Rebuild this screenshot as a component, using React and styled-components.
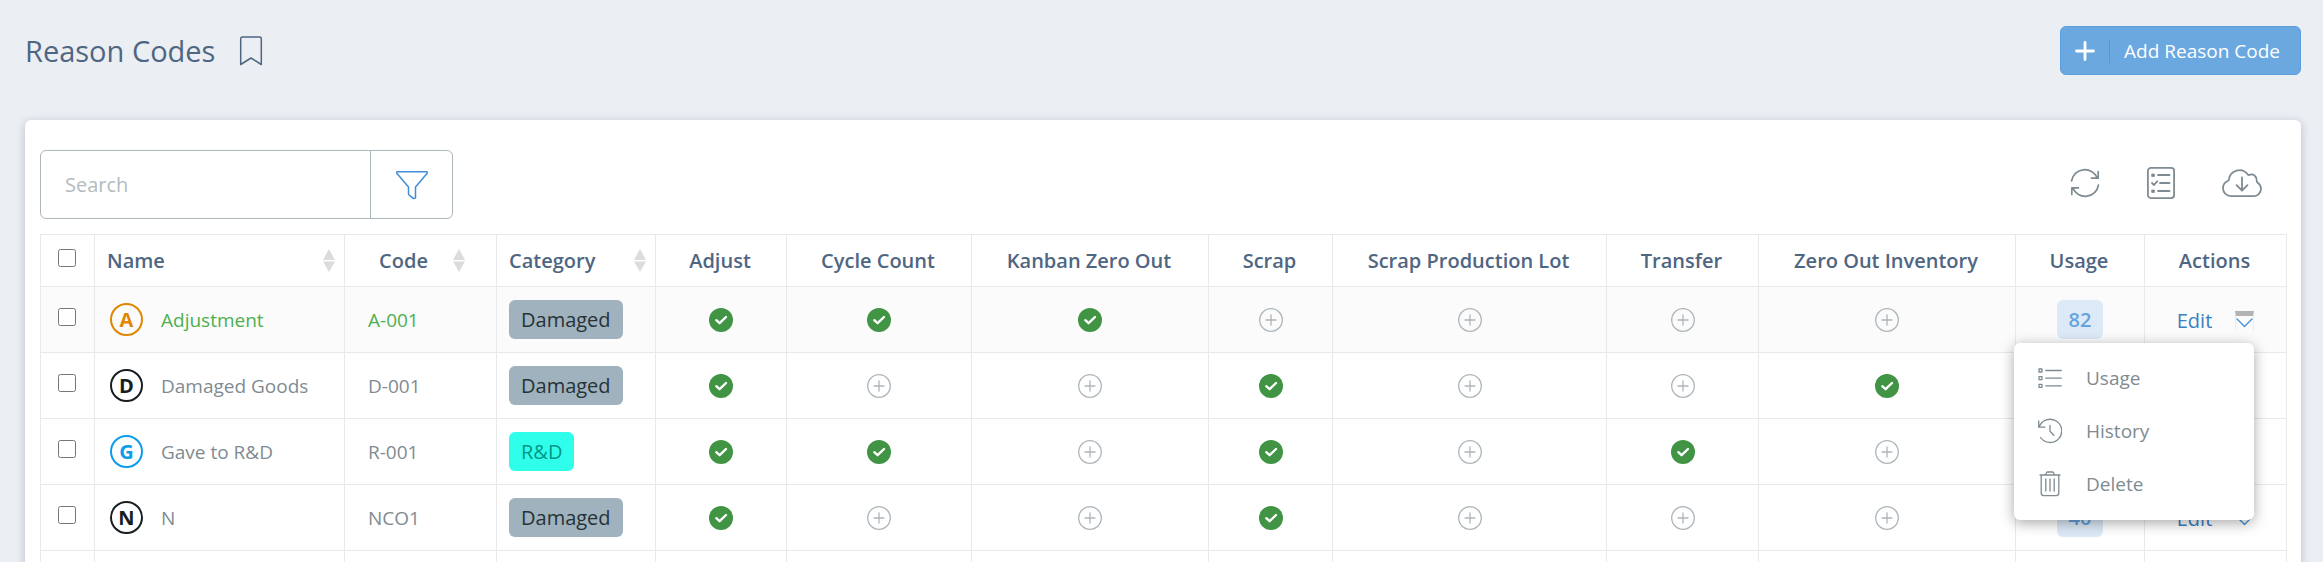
import React from 'react';
import styled, { createGlobalStyle, css } from 'styled-components';

const GlobalStyle = createGlobalStyle`
* {
    box-sizing: border-box;
}
body {
    margin: 0;
    background: #ebeef3;
    font-family: 'Open Sans', 'Noto Sans', sans-serif;
    font-size: 20px;
    line-height: 28px;
    color: #7f8b92;
}
button, input {
    font: inherit;
    color: inherit;
}
svg {
    display: block;
}
`

const Page = styled.div`
height: 100vh;
overflow: hidden;
padding: 0 22px 0 25px;
`

const Header = styled.header`
display: flex;
align-items: center;
justify-content: space-between;
height: 101px;
`

const TitleGroup = styled.div`
display: flex;
align-items: center;
gap: 24px;
`

const Title = styled.h1`
margin: 0;
font-size: 29px;
line-height: 40px;
font-weight: 400;
color: #4f6682;
`

const IconButton = styled.button`
display: flex;
align-items: center;
justify-content: center;
padding: 0;
border: none;
background: transparent;
color: ${props => props.$color || '#7f8b92'};
cursor: pointer;
`

const AddButton = styled.button`
display: flex;
align-items: center;
height: 49px;
padding: 0 20px 0 14px;
border: 1px solid #5c9fde;
border-radius: 6px;
background: #6ca8e0;
color: #fff;
font-size: 19px;
cursor: pointer;
`

const AddLabel = styled.span`
margin-left: 14px;
padding-left: 14px;
border-left: 1px solid #5796d2;
line-height: 24px;
`

const Card = styled.main`
margin-top: 19px;
padding: 30px 15px;
border-radius: 6px;
background: #fff;
box-shadow: 0 2px 8px rgba(60, 75, 95, 0.3);
`

const Toolbar = styled.div`
display: flex;
align-items: center;
justify-content: space-between;
margin-bottom: 15px;
`

const SearchBox = styled.div`
display: flex;
width: 413px;
height: 69px;
border: 1px solid #adb6bb;
border-radius: 6px;
`

const SearchInput = styled.input`
flex: 1;
min-width: 0;
padding: 0 24px;
border: none;
outline: none;
background: transparent;

&::placeholder {
    color: #b3bbc0;
    opacity: 1;
}
`

const FilterButton = styled(IconButton)`
width: 82px;
border-left: 1px solid #adb6bb;
`

const Tools = styled.div`
display: flex;
align-items: center;
gap: 47px;
padding: 0 24px 4px 0;
`

const Table = styled.table`
width: 100%;
table-layout: fixed;
border-collapse: collapse;
`

const Col = styled.col`
width: ${props => props.$w}px;
`

const HeadCell = styled.th`
height: 52px;
padding: 0 14px 0 12px;
border: 1px solid #e9e9e9;
font-weight: 600;
color: #4f6682;
text-align: center;
white-space: nowrap;
`

const SortCell = styled(HeadCell)`
padding-right: 9px;
`

const HeadInner = styled.div`
display: flex;
align-items: center;
justify-content: ${props => props.$center ? 'center' : 'space-between'};
gap: 25px;
`

const Row = styled.tr`
height: 66px;
background: ${props => props.$active ? '#fbfbfb' : '#fff'};
`

const Cell = styled.td`
padding: 0 12px;
border: 1px solid #e9e9e9;
color: ${props => props.$active ? '#4cb050' : '#7f8b92'};
font-size: 19px;
white-space: nowrap;
`

const CheckCell = styled(Cell)`
padding-right: 14px;
`

const CodeCell = styled(Cell)`
padding-left: 23px;
`

const Checkbox = styled.input`
display: block;
width: 18px;
height: 18px;
margin: 0 auto 6px;
`

const NameInner = styled.div`
display: flex;
align-items: center;
gap: 18px;
padding-left: 3px;
`

const Avatar = styled.span`
display: flex;
align-items: center;
justify-content: center;
width: 33px;
height: 33px;
border: 2px solid ${props => props.$color};
border-radius: 50%;
color: ${props => props.$color};
font-size: 20px;
font-weight: 700;
`

const badge = css`
display: inline-block;
padding: 0 12px;
border-radius: 6px;
font-size: 20px;
line-height: 39px;
font-weight: 600;
vertical-align: middle;
`

const tones = {
    Damaged: { bg: '#9fb2bd', text: '#263238' },
    'R&D': { bg: '#2fffea', text: '#009688' },
}

const Category = styled.span`
${badge}
background: ${props => tones[props.$name].bg};
color: ${props => tones[props.$name].text};
font-weight: 500;
`

const Usage = styled.a`
${badge}
background: #dce9f7;
color: #64a3e0;
text-decoration: none;
`

const FlagButton = styled(IconButton)`
margin: 0 auto;
`

const UsageCell = styled(Cell)`
text-align: center;
`

const Actions = styled.div`
position: relative;
display: flex;
align-items: center;
justify-content: center;
gap: 23px;
padding-top: 2px;
`

const EditLink = styled.a`
color: #3a7fc1;
font-size: 20px;
text-decoration: none;
`

const Toggle = styled(IconButton)`
width: 19px;
height: 20px;
border: 1px solid ${props => props.$open ? '#ececec' : 'transparent'};
border-top: 5px solid ${props => props.$open ? '#b3b3b3' : 'transparent'};
border-bottom: none;
color: #3f8fd8;
`

const Menu = styled.ul`
position: absolute;
top: 38px;
right: 20px;
z-index: 1;
width: 240px;
margin: 0;
padding: 9px 0;
border-radius: 6px;
background: #fff;
box-shadow: 0 3px 14px rgba(0, 0, 0, 0.35);
list-style: none;
`

const MenuItem = styled.button`
display: flex;
align-items: center;
gap: 24px;
width: 100%;
height: 53px;
padding: 0 24px;
border: none;
background: transparent;
cursor: pointer;
`

const Icon = ({ w, h, children, stroke = 1.5 }) => (
    <svg width={w} height={h} viewBox={`0 0 ${w} ${h}`} fill="none" stroke="currentColor" strokeWidth={stroke} strokeLinecap="round" strokeLinejoin="round" aria-hidden="true">
        {children}
    </svg>
)

const BookmarkIcon = () => (
    <Icon w={24} h={30}>
        <path d="M1.7 28.5V2.7Q1.7 1 3.4 1H20.6Q22.3 1 22.3 2.7V28.5L12 22Z"/>
    </Icon>
)

const FilterIcon = () => (
    <Icon w={34} h={30}>
        <path d="M2.6 1.8H31.4Q33 2 32 3.5L20.5 17V28L18.5 28.6L14.2 25.2Q13.5 24.6 13.5 23.8V17L2 3.5Q1 2 2.6 1.8Z"/>
    </Icon>
)

const RefreshIcon = () => (
    <Icon w={30} h={30} stroke={1.7}>
        <path d="M1.5 13A13.5 13.5 0 0 1 27.2 9.8M28.2 3.5V10.2H21.5"/>
        <path d="M28.5 17A13.5 13.5 0 0 1 2.8 20.2M1.8 26.5V19.8H8.5"/>
    </Icon>
)

const ChecklistIcon = () => (
    <Icon w={28} h={32} stroke={1.8}>
        <rect x="0.9" y="0.9" width="26.2" height="30.2" rx="3"/>
        <path d="M11 8H22.5M13 16H22.5M11 24H22.5M5 16L7 18L10.3 14.3"/>
        <path d="M5 7H7.4V9.4H5ZM5 23H7.4V25.4H5Z" fill="currentColor" strokeWidth="0.8"/>
    </Icon>
)

const CloudIcon = () => (
    <Icon w={40} h={30} stroke={1.8}>
        <path d="M9 28.2A8 8 0 0 1 1 20.5Q1 15 6 12.8Q6.7 12.5 6.9 11.7A10.5 10.5 0 0 1 25.8 6.5Q26.3 7.2 27.2 6.9Q30 5.8 32.5 7.5Q35 9.5 34.8 13.2Q34.8 14 35.5 14.5Q39 17 39 20.8A7.5 7.5 0 0 1 31.5 28.2Z"/>
        <path d="M20 9.5V22M14.5 17.2L20 22.5L25.5 17.2"/>
    </Icon>
)

const PlusIcon = () => (
    <Icon w={20} h={20} stroke={2.8}>
        <path d="M10 1.5V18.5M1.5 10H18.5"/>
    </Icon>
)

const SortIcon = () => (
    <svg width="12" height="23" viewBox="0 0 12 23" fill="#dcdcdc" aria-hidden="true">
        <path d="M6 0L12 11H0ZM0 12.5H12L6 23Z"/>
    </svg>
)

const CheckIcon = () => (
    <svg width="24" height="24" viewBox="0 0 24 24" aria-hidden="true">
        <circle cx="12" cy="12" r="12" fill="#409444"/>
        <path d="M7.3 12.2L10.6 15.2L17 9" fill="none" stroke="#fff" strokeWidth="2.4" strokeLinecap="round" strokeLinejoin="round"/>
    </svg>
)

const EmptyIcon = () => (
    <svg width="24" height="24" viewBox="0 0 24 24" fill="none" stroke="#adb6bb" strokeWidth="1.3" aria-hidden="true">
        <circle cx="12" cy="12" r="11.3"/>
        <path d="M12 7V17M7 12H17" strokeLinecap="round"/>
    </svg>
)

const ChevronIcon = () => (
    <Icon w={17} h={10} stroke={1.3}>
        <path d="M1 1L8.5 8.5L16 1"/>
    </Icon>
)

const ListIcon = () => (
    <Icon w={24} h={22} stroke={1.3}>
        <path d="M7.8 3.5H23.3M7.8 11.2H23.3M7.8 18.8H23.3M1 2H4V5H1ZM1 9.7H4V12.7H1ZM1 17.3H4V20.3H1Z"/>
    </Icon>
)

const HistoryIcon = () => (
    <Icon w={24} h={26} stroke={1.3}>
        <path d="M0.7 3V9.2H6.8M1.2 9A11.6 11.6 0 1 1 2.6 19.5M12 7.5V13.3L15.8 17.3"/>
    </Icon>
)

const TrashIcon = () => (
    <Icon w={24} h={26} stroke={1.3}>
        <path d="M2 4H22M3.2 4.5V22Q3.2 24.6 5.8 24.6H18.2Q20.8 24.6 20.8 22V4.5M7.5 4L8.6 1.6Q8.8 1 9.6 1H14.4Q15.2 1 15.4 1.6L16.5 4M7.8 8V20M12 8V20M16.2 8V20"/>
    </Icon>
)

const flags = ['Adjust', 'Cycle Count', 'Kanban Zero Out', 'Scrap', 'Scrap Production Lot', 'Transfer', 'Zero Out Inventory'];

const widths = [54, 250, 152, 159, 131, 185, 237, 124, 274, 152, 257, 129, 142];

const rows = [
    { letter: 'A', color: '#e08600', name: 'Adjustment', code: 'A-001', category: 'Damaged', on: [0, 1, 2], usage: 82, active: true },
    { letter: 'D', color: '#171d21', name: 'Damaged Goods', code: 'D-001', category: 'Damaged', on: [0, 3, 6] },
    { letter: 'G', color: '#0c9cee', name: 'Gave to R&D', code: 'R-001', category: 'R&D', on: [0, 1, 3, 5] },
    { letter: 'N', color: '#171d21', name: 'N', code: 'NCO1', category: 'Damaged', on: [0, 3], usage: 40 },
];

const RowMenu = () => (
    <Menu>
        <li><MenuItem><ListIcon/>Usage</MenuItem></li>
        <li><MenuItem><HistoryIcon/>History</MenuItem></li>
        <li><MenuItem><TrashIcon/>Delete</MenuItem></li>
    </Menu>
)

const App = () => {
    return (
        <Page>
            <GlobalStyle/>
            <Header>
                <TitleGroup>
                    <Title>Reason Codes</Title>
                    <IconButton $color="#4f6682" aria-label="Bookmark"><BookmarkIcon/></IconButton>
                </TitleGroup>
                <AddButton>
                    <PlusIcon/>
                    <AddLabel>Add Reason Code</AddLabel>
                </AddButton>
            </Header>
            <Card>
                <Toolbar>
                    <SearchBox>
                        <SearchInput type="text" placeholder="Search" aria-label="Search"/>
                        <FilterButton $color="#3f8fd8" aria-label="Filter"><FilterIcon/></FilterButton>
                    </SearchBox>
                    <Tools>
                        <IconButton aria-label="Refresh"><RefreshIcon/></IconButton>
                        <IconButton aria-label="Columns"><ChecklistIcon/></IconButton>
                        <IconButton aria-label="Download"><CloudIcon/></IconButton>
                    </Tools>
                </Toolbar>
                <Table>
                    <colgroup>
                        {widths.map((w, i) => <Col key={i} $w={w}/>)}
                    </colgroup>
                    <thead>
                        <tr>
                            <HeadCell><Checkbox type="checkbox" aria-label="Select all"/></HeadCell>
                            <SortCell><HeadInner>Name<SortIcon/></HeadInner></SortCell>
                            <SortCell><HeadInner $center>Code<SortIcon/></HeadInner></SortCell>
                            <SortCell><HeadInner>Category<SortIcon/></HeadInner></SortCell>
                            {flags.map(flag => <HeadCell key={flag}>{flag}</HeadCell>)}
                            <HeadCell>Usage</HeadCell>
                            <HeadCell>Actions</HeadCell>
                        </tr>
                    </thead>
                    <tbody>
                        {rows.map(row => (
                            <Row key={row.code} $active={row.active}>
                                <CheckCell><Checkbox type="checkbox" aria-label={row.name}/></CheckCell>
                                <Cell $active={row.active}>
                                    <NameInner>
                                        <Avatar $color={row.color}>{row.letter}</Avatar>
                                        {row.name}
                                    </NameInner>
                                </Cell>
                                <CodeCell $active={row.active}>{row.code}</CodeCell>
                                <Cell><Category $name={row.category}>{row.category}</Category></Cell>
                                {flags.map((flag, i) => (
                                    <Cell key={flag}>
                                        <FlagButton aria-label={flag}>
                                            {row.on.includes(i) ? <CheckIcon/> : <EmptyIcon/>}
                                        </FlagButton>
                                    </Cell>
                                ))}
                                <UsageCell>{row.usage && <Usage href="#usage">{row.usage}</Usage>}</UsageCell>
                                <Cell>
                                    <Actions>
                                        <EditLink href="#edit">Edit</EditLink>
                                        <Toggle $open={row.active} aria-label="More actions"><ChevronIcon/></Toggle>
                                        {row.active && <RowMenu/>}
                                    </Actions>
                                </Cell>
                            </Row>
                        ))}
                        <Row>
                            {widths.map((w, i) => <Cell key={i}/>)}
                        </Row>
                    </tbody>
                </Table>
            </Card>
        </Page>
    )
}

export default App
